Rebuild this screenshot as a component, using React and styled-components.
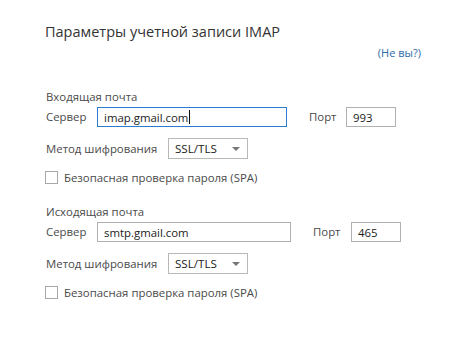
import styled, { createGlobalStyle } from "styled-components";

const GlobalStyle = createGlobalStyle`
  html, body {
    margin: 0;
    padding: 0;
    background: #ffffff;
  }
  body {
    font-family: "Open Sans", "Noto Sans", "Liberation Sans", sans-serif;
    color: #444;
  }
`;

const Page = styled.div`
  width: 461px;
  height: 349px;
  box-sizing: border-box;
  padding: 22px 40px 0 45px;
  display: flex;
  flex-direction: column;
`;

const Title = styled.h1`
  margin: 0;
  font-size: 14.5px;
  font-weight: 400;
  color: #333;
  line-height: 20px;
`;

const NotYou = styled.a`
  align-self: flex-end;
  margin-top: 3px;
  font-size: 11px;
  line-height: 16px;
  color: #2d6aa8;
  text-decoration: none;
  cursor: pointer;
`;

const Section = styled.section`
  display: flex;
  flex-direction: column;
  margin-top: ${(p) => p.$top}px;
`;

const SectionTitle = styled.div`
  font-size: 11.4px;
  line-height: 16px;
  color: #4a4a4a;
  padding-left: 1px;
`;

const Row = styled.div`
  display: flex;
  align-items: center;
  margin-top: ${(p) => p.$top || 0}px;
`;

const Label = styled.span`
  font-size: 11.4px;
  line-height: 16px;
  color: #4a4a4a;
  padding-left: 1px;
  width: ${(p) => (p.$width ? `${p.$width}px` : "auto")};
  flex-shrink: 0;
`;

const TextBox = styled.div`
  box-sizing: border-box;
  width: ${(p) => p.$width}px;
  height: 20px;
  border: 1px solid ${(p) => (p.$focused ? "#2b7bd3" : "#b0b0b0")};
  padding: 0 6px;
  display: flex;
  align-items: center;
  font-size: 11.4px;
  color: #222;
  flex-shrink: 0;
`;

const Caret = styled.span`
  display: inline-block;
  width: 1px;
  height: 14px;
  background: #111;
  margin-left: 1px;
`;

const Select = styled.div`
  box-sizing: border-box;
  width: 80px;
  height: 21px;
  border: 1px solid #b8b8b8;
  padding: 0 7px 0 6px;
  display: flex;
  align-items: center;
  justify-content: space-between;
  font-size: 11.6px;
  color: #222;
`;

const Arrow = styled.span`
  width: 0;
  height: 0;
  border-left: 4px solid transparent;
  border-right: 4px solid transparent;
  border-top: 4px solid #777;
`;

const CheckRow = styled.label`
  display: flex;
  align-items: center;
  gap: 6px;
  margin-top: ${(p) => p.$top}px;
  font-size: 11.4px;
  color: #4a4a4a;
`;

const CheckBox = styled.span`
  box-sizing: border-box;
  width: 13px;
  height: 13px;
  border: 1px solid #a8a8a8;
  background: #fff;
`;

const Spacer = styled.span`
  flex-shrink: 0;
  width: ${(p) => p.$width}px;
`;

function AccountSection({ title, top, server, port, focused, serverWidth, portGap, portLabelWidth }) {
  return (
    <Section $top={top}>
      <SectionTitle>{title}</SectionTitle>
      <Row $top={2}>
        <Label $width={51}>Сервер</Label>
        <TextBox $width={serverWidth} $focused={focused}>
          {server}
          {focused && <Caret />}
        </TextBox>
        <Spacer $width={portGap} />
        <Label $width={portLabelWidth}>Порт</Label>
        <TextBox $width={50}>{port}</TextBox>
      </Row>
      <Row $top={11}>
        <Label $width={122}>Метод шифрования</Label>
        <Select>
          SSL/TLS
          <Arrow />
        </Select>
      </Row>
      <CheckRow $top={11}>
        <CheckBox />
        Безопасная проверка пароля (SPA)
      </CheckRow>
    </Section>
  );
}

export default function App() {
  return (
    <>
      <GlobalStyle />
      <Page>
        <Title>Параметры учетной записи IMAP</Title>
        <NotYou>(Не вы?)</NotYou>
        <AccountSection
          title="Входящая почта"
          top={28}
          server="imap.gmail.com"
          port="993"
          focused
          serverWidth={190}
          portGap={21}
          portLabelWidth={37}
        />
        <AccountSection
          title="Исходящая почта"
          top={19}
          server="smtp.gmail.com"
          port="465"
          serverWidth={194}
          portGap={21}
          portLabelWidth={38}
        />
      </Page>
    </>
  );
}
